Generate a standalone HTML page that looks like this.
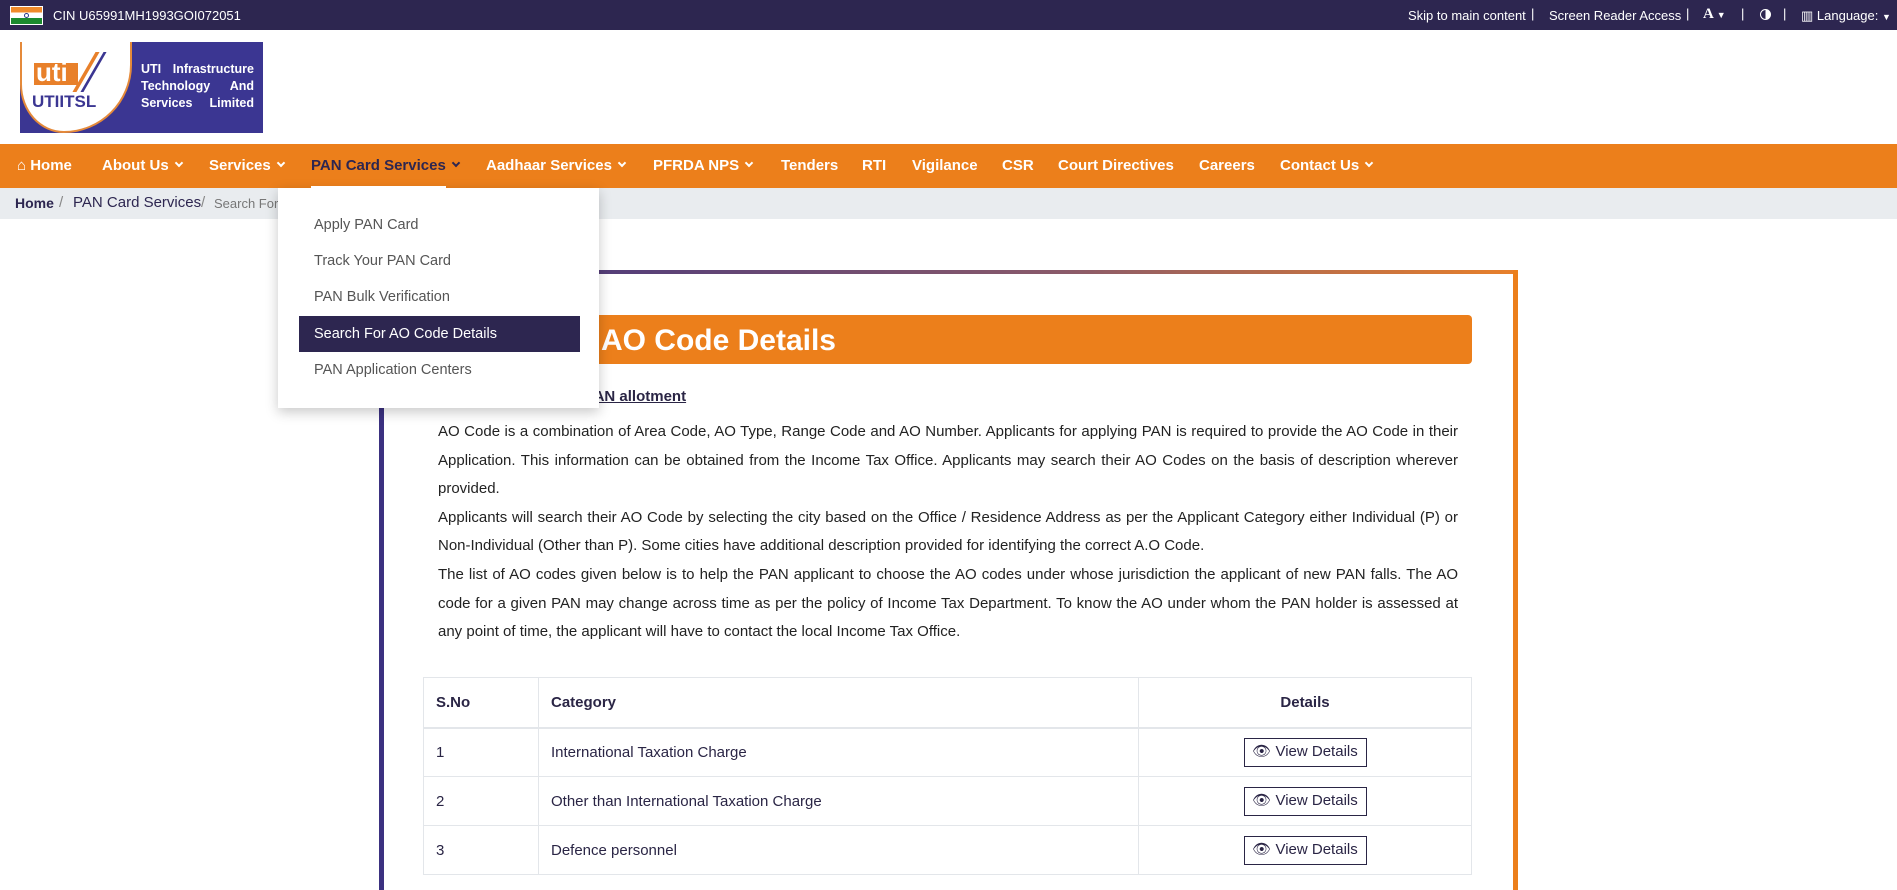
<!DOCTYPE html>
<html><head><meta charset="utf-8">
<style>
*{margin:0;padding:0;box-sizing:border-box}
body{width:1897px;height:888px;overflow:hidden;background:#fff;font-family:"Liberation Sans",Arial,sans-serif;position:relative;color:#222}
.a{position:absolute;white-space:nowrap}
#top{position:absolute;left:0;top:0;width:1897px;height:30px;background:#2d2650;color:#fff;font-size:13px}
#nav{position:absolute;left:0;top:144px;width:1897px;height:44px;background:#ec7f1b;color:#fff;font-weight:bold;font-size:15px}
#nav .a{top:13px}
.chev{display:inline-block;width:6px;height:6px;border-right:2px solid currentColor;border-bottom:2px solid currentColor;transform:rotate(45deg);margin-left:7px;position:relative;top:-4px}
#bc{position:absolute;left:0;top:188px;width:1897px;height:31px;background:#e9ecef;font-size:15px;color:#2d2650}
#dd{position:absolute;left:278px;top:188px;width:321px;height:220px;background:#fff;box-shadow:0 4px 12px rgba(0,0,0,.22);font-size:14.5px;color:#555}
#dd .a{left:36px}
p.t{position:absolute;left:438px;width:1020px;font-size:15px;line-height:28.6px;text-align:justify;color:#222}
td,th{border:1px solid #e3e6ea;font-size:15px;color:#2a2545;text-align:left;padding:0 12px}
.btn{display:inline-block;border:1.5px solid #2a2545;width:123px;height:29px;line-height:26px;text-align:center;font-size:15px;color:#2a2545}
</style></head><body>
<div id="top">
 <div class="a" style="left:10px;top:6px;width:33px;height:19px;border:1px solid #fff;background:linear-gradient(#f08a2a 0 33%,#fff 33% 66%,#1b8a2e 66%)"></div>
 <div class="a" style="left:24px;top:13px;width:5px;height:5px;border-radius:50%;border:1px solid #2a3a8a"></div>
 <div class="a" style="left:53px;top:8px">CIN U65991MH1993GOI072051</div>
 <div class="a" style="left:1408px;top:8px">Skip to main content</div>
 <div class="a" style="left:1531px;top:6px">|</div>
 <div class="a" style="left:1549px;top:8px">Screen Reader Access</div>
 <div class="a" style="left:1686px;top:6px">|</div>
 <div class="a" style="left:1703px;top:6px;font-family:'Liberation Serif',serif;font-weight:bold;font-size:15px">A <span style="font-size:9px">▼</span></div>
 <div class="a" style="left:1741px;top:6px">|</div>
 <div class="a" style="left:1760px;top:9px;width:11px;height:11px;border-radius:50%;border:1.5px solid #fff;background:linear-gradient(90deg,#2d2650 50%,#fff 50%)"></div>
 <div class="a" style="left:1783px;top:6px">|</div>
 <div class="a" style="left:1801px;top:8px">▥ Language: <span style="font-size:9px">▼</span></div>
</div>
<!-- logo -->
<div class="a" style="left:20px;top:42px;width:243px;height:91px;background:#3b3692"></div>
<div class="a" style="left:20px;top:42px;width:112px;height:91px;background:#fff;border:2px solid #e58a3a;border-top:none;border-radius:0 0 70px 45px / 0 0 70px 50px"></div>
<div class="a" style="left:34px;top:63px;width:44px;height:22px;background:#e8802a"></div>
<div class="a" style="left:36px;top:59px;color:#fff;font-weight:bold;font-size:26px;line-height:26px">uti</div>
<div class="a" style="left:84px;top:52px;width:4px;height:40px;background:#e8802a;transform:skewX(-30deg)"></div>
<div class="a" style="left:92px;top:52px;width:3px;height:40px;background:#3b3692;transform:skewX(-30deg)"></div>
<div class="a" style="left:32px;top:92px;color:#3b3692;font-weight:bold;font-size:17px">UTIITSL</div>
<div class="a" style="left:141px;top:61px;width:113px;color:#fff;font-weight:bold;font-size:12.5px;line-height:17px;text-align:justify;white-space:normal;text-align-last:justify">UTI Infrastructure Technology And Services Limited</div>
<div id="nav">
 <div class="a" style="left:17px">⌂ Home</div>
 <div class="a" style="left:102px">About Us<span class="chev"></span></div>
 <div class="a" style="left:209px">Services<span class="chev"></span></div>
 <div class="a" style="left:311px;color:#2d2650">PAN Card Services<span class="chev"></span></div>
 <div class="a" style="left:486px">Aadhaar Services<span class="chev"></span></div>
 <div class="a" style="left:653px">PFRDA NPS<span class="chev"></span></div>
 <div class="a" style="left:781px">Tenders</div>
 <div class="a" style="left:862px">RTI</div>
 <div class="a" style="left:912px">Vigilance</div>
 <div class="a" style="left:1002px">CSR</div>
 <div class="a" style="left:1058px">Court Directives</div>
 <div class="a" style="left:1199px">Careers</div>
 <div class="a" style="left:1280px">Contact Us<span class="chev"></span></div>
</div>
<div id="bc">
 <div class="a" style="left:15px;top:7px;font-weight:bold;font-size:14px">Home</div>
 <div class="a" style="left:59px;top:6px;color:#888">/</div>
 <div class="a" style="left:73px;top:6px">PAN Card Services</div>
 <div class="a" style="left:201px;top:6px;color:#888">/</div>
 <div class="a" style="left:214px;top:8px;color:#777;font-size:13px">Search For</div>
</div>
<!-- content box -->
<div class="a" style="left:379px;top:270px;width:1139px;height:4px;background:linear-gradient(90deg,#3b3180,#8a5a6a 60%,#e8802a)"></div>
<div class="a" style="left:379px;top:270px;width:5px;height:620px;background:#3b3180"></div>
<div class="a" style="left:1513px;top:270px;width:5px;height:620px;background:#ec7f1b"></div>
<div class="a" style="left:423px;top:315px;width:1049px;height:49px;background:#ec7f1b;border-radius:4px;color:#fff;font-weight:bold;font-size:30px;padding:9px 0 0 14px">Search For AO Code Details</div>
<div class="a" style="left:438px;top:388px;font-weight:bold;font-size:15px;color:#2a2545;text-decoration:underline">AO Code Search for PAN allotment</div>
<p class="t" style="top:418px">AO Code is a combination of Area Code, AO Type, Range Code and AO Number. Applicants for applying PAN is required to provide the AO Code in their Application. This information can be obtained from the Income Tax Office. Applicants may search their AO Codes on the basis of description wherever provided.<br>Applicants will search their AO Code by selecting the city based on the Office / Residence Address as per the Applicant Category either Individual (P) or Non-Individual (Other than P). Some cities have additional description provided for identifying the correct A.O Code.<br>The list of AO codes given below is to help the PAN applicant to choose the AO codes under whose jurisdiction the applicant of new PAN falls. The AO code for a given PAN may change across time as per the policy of Income Tax Department. To know the AO under whom the PAN holder is assessed at any point of time, the applicant will have to contact the local Income Tax Office.</p>
<table class="a" style="left:423px;top:677px;width:1049px;border-collapse:collapse">
 <tr style="height:50px;border-bottom:2px solid #e3e6ea"><th style="width:115px">S.No</th><th style="width:600px">Category</th><th style="text-align:center">Details</th></tr>
 <tr style="height:49px"><td>1</td><td>International Taxation Charge</td><td style="text-align:center"><span class="btn">👁 View Details</span></td></tr>
 <tr style="height:49px"><td>2</td><td>Other than International Taxation Charge</td><td style="text-align:center"><span class="btn">👁 View Details</span></td></tr>
 <tr style="height:49px"><td>3</td><td>Defence personnel</td><td style="text-align:center"><span class="btn">👁 View Details</span></td></tr>
</table>
<!-- dropdown -->
<div id="dd">
 <div class="a" style="left:33px;top:-2px;width:135px;height:3px;background:#fff"></div>
 <div class="a" style="top:29px">Apply PAN Card</div>
 <div class="a" style="top:65px">Track Your PAN Card</div>
 <div class="a" style="top:101px">PAN Bulk Verification</div>
 <div class="a" style="left:21px!important;top:128px;width:281px;height:36px;background:#2d2650"></div>
 <div class="a" style="top:138px;color:#fff">Search For AO Code Details</div>
 <div class="a" style="top:174px">PAN Application Centers</div>
</div>
</body></html>
